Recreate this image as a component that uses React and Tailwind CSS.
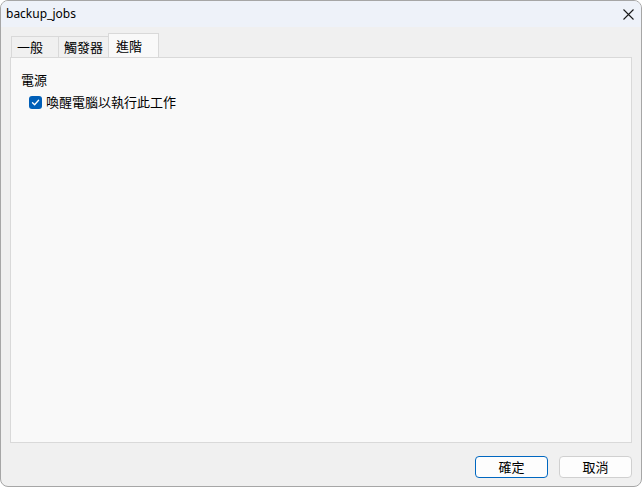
const cjk = { fontFamily: '"Noto Sans CJK TC", "Noto Sans", sans-serif' };

const Tab = ({ label, active, width }) => {
  if (active) {
    return (
      <div
        className="h-[24px] -mb-px pl-[7px] flex items-center bg-[#f9f9f9] border border-b-0 border-[#d9d9d9] relative z-10 text-[13px] text-black"
        style={{ width }}
      >
        {label}
      </div>
    );
  }
  return (
    <div
      className="h-[21px] mt-[3px] pl-[5px] flex items-center bg-[#f0f0f0] border border-b-0 border-r-0 border-[#d9d9d9] text-[13px] text-black"
      style={{ width }}
    >
      {label}
    </div>
  );
};

export default function App() {
  return (
    <div className="w-[642px] h-[487px] bg-white">
      <div
        className="w-full h-full rounded-[8px] border border-[#a6a6a6] bg-[#f0f0f0] overflow-hidden flex flex-col"
        style={cjk}
      >
        <div className="h-[26px] bg-[#eef2f9] flex items-center justify-between pl-[5px] pr-[6px] shrink-0">
          <span
            className="text-[12px] text-black"
            style={{ fontFamily: '"Noto Sans", "Liberation Sans", sans-serif' }}
          >
            backup_jobs
          </span>
          <svg width="11" height="11" viewBox="0 0 11 11" className="mr-[1px]">
            <path d="M0.5 0.5 L10.5 10.5 M10.5 0.5 L0.5 10.5" stroke="#1a1a1a" strokeWidth="1.1" />
          </svg>
        </div>

        <div className="flex-1 flex flex-col px-[9px] pt-[6px]">
          <div className="flex items-start pl-[1px]">
            <Tab label="一般" width={47} />
            <Tab label="觸發器" width={50} />
            <Tab label="進階" width={51} active />
          </div>
          <div className="h-[386px] bg-[#f9f9f9] border border-[#d9d9d9] px-[10px] pt-[13px]">
            <div className="text-[13px] text-black leading-[18px]">電源</div>
            <label className="flex items-center gap-[4px] mt-[4px] ml-[8px] text-[13px] text-black leading-[18px]">
              <span className="w-[13px] h-[13px] rounded-[3px] bg-[#005fb8] flex items-center justify-center">
                <svg width="9" height="9" viewBox="0 0 9 9">
                  <path d="M1.5 4.8 L3.6 6.8 L7.6 2.3" fill="none" stroke="white" strokeWidth="1.3" strokeLinecap="round" strokeLinejoin="round" />
                </svg>
              </span>
              喚醒電腦以執行此工作
            </label>
          </div>
          <div className="flex justify-end gap-[11px] mt-[13px]">
            <button className="w-[73px] h-[22px] rounded-[4px] border border-[#0067c0] bg-[#fdfdfd] text-[13px] text-black flex items-center justify-center">
              確定
            </button>
            <button className="w-[73px] h-[22px] rounded-[4px] border border-[#d0d0d0] bg-[#fdfdfd] text-[13px] text-black flex items-center justify-center">
              取消
            </button>
          </div>
        </div>
      </div>
    </div>
  );
}
